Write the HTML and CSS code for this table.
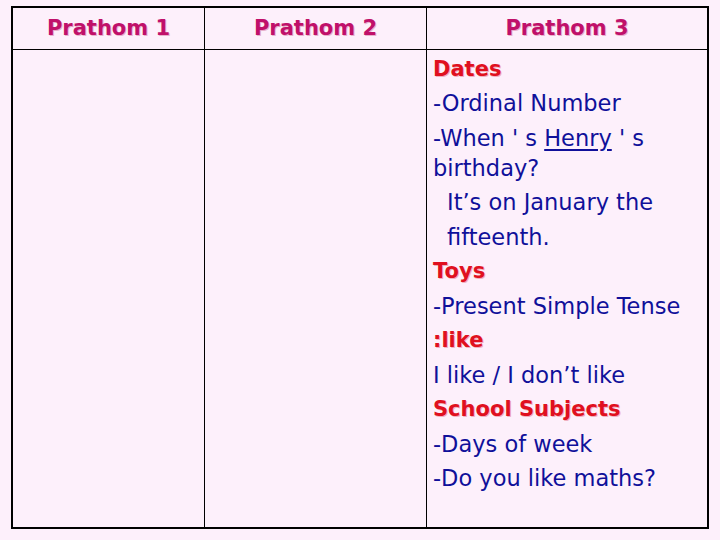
FILE: index.html
```html
<!DOCTYPE html>
<html>
<head>
<meta charset="utf-8">
<link rel="stylesheet" href="styles.css">
</head>
<body>
<table class="grid">
  <tr class="head">
    <th class="c1">Prathom 1</th>
    <th class="c2">Prathom 2</th>
    <th class="c3">Prathom 3</th>
  </tr>
  <tr class="body">
    <td></td>
    <td></td>
    <td class="content">
      <div class="ln red">Dates</div>
      <div class="ln">-Ordinal Number</div>
      <div class="ln">-When ' s <span class="u">Henry</span> ' s</div>
      <div class="ln wrap">birthday?</div>
      <div class="ln ind">It’s on January the</div>
      <div class="ln ind">fifteenth.</div>
      <div class="ln red">Toys</div>
      <div class="ln">-Present Simple Tense</div>
      <div class="ln red">:like</div>
      <div class="ln">I like / I don’t like</div>
      <div class="ln red">School Subjects</div>
      <div class="ln">-Days of week</div>
      <div class="ln">-Do you like maths?</div>
    </td>
  </tr>
</table>
</body>
</html>
```
FILE: styles.css
```css
html, body {
  margin: 0;
  padding: 0;
  background: #fdf0fb;
}
body {
  padding: 6px 0 0 11px;
  font-family: "Comic Sans MS", "DejaVu Sans", sans-serif;
}
.grid {
  border-collapse: collapse;
  width: 698px;
  height: 523px;
  border: 2px solid #000;
  table-layout: fixed;
}
.grid th, .grid td {
  border: 1px solid #000;
  padding: 0;
  vertical-align: top;
}
.c1 { width: 191px; }
.c2 { width: 221px; }
.head { height: 42px; }
.head th {
  vertical-align: middle;
  font-size: 21px;
  font-weight: bold;
  color: #c0106a;
  text-shadow: 1px 1px 0 #e8b0cc;
}
.content {
  padding: 2px 0 0 6px !important;
  color: #10109a;
  font-size: 22.5px;
}
.ln {
  height: 34.5px;
  line-height: 34.5px;
  white-space: nowrap;
}
.ln.wrap { height: 30px; line-height: 26px; }
.ln.ind { padding-left: 14px; }
.red {
  color: #e01020;
  font-weight: bold;
  font-size: 21px;
  text-shadow: 1px 1px 0 #f0b0c0;
}
.u { text-decoration: underline; text-underline-offset: 3px; }
```
